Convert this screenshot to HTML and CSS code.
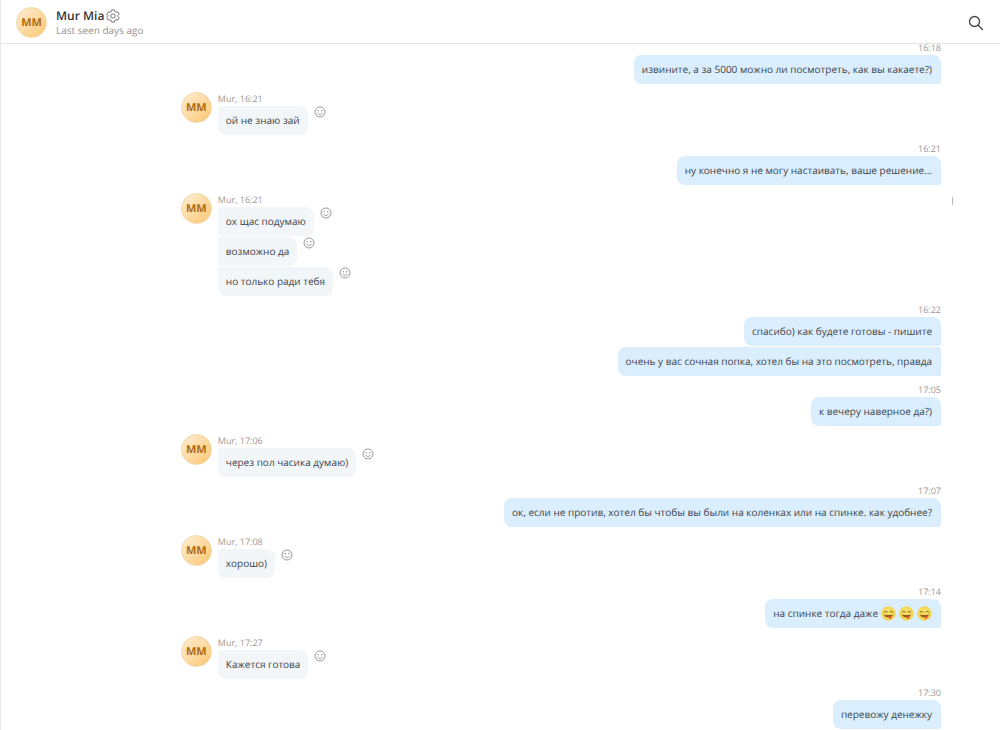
FILE: index.html
```html
<!DOCTYPE html>
<html lang="ru">
<head>
  <meta charset="UTF-8" />
  <meta name="viewport" content="width=device-width, initial-scale=1.0" />
  <title>Mur Mia</title>
  <link rel="stylesheet" href="styles.css">
</head>
<body>
  <!-- shared icons -->
  <svg class="sprite" aria-hidden="true">
    <defs>
      <radialGradient id="yum-face" cx="50%" cy="40%" r="60%">
        <stop offset="0" stop-color="#fbe66c" />
        <stop offset="1" stop-color="#f0cd48" />
      </radialGradient>
    </defs>
    <symbol id="smile" viewBox="0 0 12 12">
      <circle cx="6" cy="6" r="5" fill="none" stroke="#8c8c8c" stroke-width=".9" />
      <circle cx="4.2" cy="4.8" r=".7" fill="#8c8c8c" />
      <circle cx="7.8" cy="4.8" r=".7" fill="#8c8c8c" />
      <path d="M3.5 7.2c1.1 1.7 3.9 1.7 5 0" fill="none" stroke="#8c8c8c" stroke-width=".8" stroke-linecap="round" />
    </symbol>
    <symbol id="yum" viewBox="0 0 16 16">
      <circle cx="8" cy="8" r="7.7" fill="url(#yum-face)" />
      <path d="M3.4 6.4q1.6-1.6 3.4 0M9.2 6.400q1.700-1.600 3.400 0" fill="none" stroke="#7b6420" stroke-width="1" stroke-linecap="round" />
      <path d="M3.200 9q4.800 1.200 9.600 0q-1 3.200-4.800 3.200t-4.800-3.200z" fill="#8a5a1a" />
      <path d="M7.600 11q2.200-1.200 3.600-.2q.4 2.600-1.400 2.800q-1.700 0-2.200-2.600z" fill="#dc5230" />
    </symbol>
  </svg>

  <header class="header">
    <div class="avatar">MM</div>
    <div class="contact">
      <div class="contact-name">
        <h1>Mur Mia</h1>
        <button class="icon-btn" type="button" aria-label="Settings">
          <svg width="14" height="14" viewBox="0 0 14 14" fill="none" stroke="#6a6a6a" stroke-width=".9" stroke-linejoin="round">
            <path d="M5.5 1h3l.4 1.7 1.1.6 1.7-.5 1.5 2.5L12 6.500v1l1.200 1.200-1.500 2.500-1.700-.5-1.100.6L8.500 13h-3l-.4-1.700-1.100-.6-1.700.5L.8 8.700 2 7.500v-1L.8 5.300l1.500-2.500 1.700.5 1.100-.6z" />
            <circle cx="7" cy="7" r="2.200" />
          </svg>
        </button>
      </div>
      <p class="last-seen">Last seen days ago</p>
    </div>
    <button class="icon-btn search" type="button" aria-label="Search">
      <svg width="16" height="16" viewBox="0 0 16 16" fill="none" stroke="#444" stroke-width="1.300" stroke-linecap="round">
        <circle cx="6.500" cy="6.500" r="5" />
        <path d="M10.200 10.200l4.300 4.300" />
      </svg>
    </button>
  </header>

  <main class="messages">
    <section class="group own">
      <div class="meta">16:18</div>
      <div class="row"><p class="bubble">извините, а за 5000 можно ли посмотреть, как вы какаете?)</p></div>
    </section>

    <section class="group">
      <div class="avatar">MM</div>
      <div class="thread">
        <div class="meta">Mur, 16:21</div>
        <div class="row">
          <p class="bubble">ой не знаю зай</p>
          <button class="icon-btn react" type="button" aria-label="React"><svg width="12" height="12"><use href="#smile" /></svg></button>
        </div>
      </div>
    </section>

    <section class="group own">
      <div class="meta">16:21</div>
      <div class="row"><p class="bubble">ну конечно я не могу настаивать, ваше решение...</p></div>
    </section>

    <section class="group">
      <div class="avatar">MM</div>
      <div class="thread">
        <div class="meta">Mur, 16:21</div>
        <div class="row">
          <p class="bubble">ох щас подумаю</p>
          <button class="icon-btn react" type="button" aria-label="React"><svg width="12" height="12"><use href="#smile" /></svg></button>
        </div>
        <div class="row">
          <p class="bubble">возможно да</p>
          <button class="icon-btn react" type="button" aria-label="React"><svg width="12" height="12"><use href="#smile" /></svg></button>
        </div>
        <div class="row">
          <p class="bubble">но только ради тебя</p>
          <button class="icon-btn react" type="button" aria-label="React"><svg width="12" height="12"><use href="#smile" /></svg></button>
        </div>
      </div>
    </section>

    <section class="group own">
      <div class="meta">16:22</div>
      <div class="row"><p class="bubble">спасибо) как будете готовы - пишите</p></div>
      <div class="row"><p class="bubble">очень у вас сочная попка, хотел бы на это посмотреть, правда</p></div>
    </section>

    <section class="group own">
      <div class="meta">17:05</div>
      <div class="row"><p class="bubble">к вечеру наверное да?)</p></div>
    </section>

    <section class="group">
      <div class="avatar">MM</div>
      <div class="thread">
        <div class="meta">Mur, 17:06</div>
        <div class="row">
          <p class="bubble">через пол часика думаю)</p>
          <button class="icon-btn react" type="button" aria-label="React"><svg width="12" height="12"><use href="#smile" /></svg></button>
        </div>
      </div>
    </section>

    <section class="group own">
      <div class="meta">17:07</div>
      <div class="row"><p class="bubble">ок, если не против, хотел бы чтобы вы были на коленках или на спинке. как удобнее?</p></div>
    </section>

    <section class="group">
      <div class="avatar">MM</div>
      <div class="thread">
        <div class="meta">Mur, 17:08</div>
        <div class="row">
          <p class="bubble">хорошо)</p>
          <button class="icon-btn react" type="button" aria-label="React"><svg width="12" height="12"><use href="#smile" /></svg></button>
        </div>
      </div>
    </section>

    <section class="group own">
      <div class="meta">17:14</div>
      <div class="row">
        <p class="bubble with-emoji">на спинке тогда даже
          <svg class="emoji"><use href="#yum" /></svg>
          <svg class="emoji"><use href="#yum" /></svg>
          <svg class="emoji"><use href="#yum" /></svg>
        </p>
      </div>
    </section>

    <section class="group">
      <div class="avatar">MM</div>
      <div class="thread">
        <div class="meta">Mur, 17:27</div>
        <div class="row">
          <p class="bubble">Кажется готова</p>
          <button class="icon-btn react" type="button" aria-label="React"><svg width="12" height="12"><use href="#smile" /></svg></button>
        </div>
      </div>
    </section>

    <section class="group own">
      <div class="meta">17:30</div>
      <div class="row"><p class="bubble">перевожу денежку</p></div>
    </section>
    <div class="scroll-mark"></div>
  </main>
</body>
</html>
```

FILE: styles.css
```css
* { box-sizing: border-box; }
body {
  margin: 0;
  height: 100vh;
  display: flex;
  flex-direction: column;
  overflow: hidden;
  border-left: 1px solid #e9e9e9;
  background: #fff;
  color: #3c444b;
  font-family: "Open Sans", "Noto Sans", sans-serif;
  font-size: 10px;
  text-rendering: geometricPrecision;
}
h1, p { margin: 0; }
.sprite { position: absolute; width: 0; height: 0; }

.icon-btn { display: flex; padding: 0; border: 0; background: none; cursor: pointer; }

.header {
  display: flex;
  flex: none;
  align-items: center;
  padding: 7px 16px 5px 15px;
  border-bottom: 1px solid #e3e3e3;
  background: #fff;
  z-index: 1;
}
.contact { flex: 1; margin-left: 9px; }
.contact-name { display: flex; align-items: center; gap: 2px; }
.contact-name h1 { font-size: 12px; line-height: 16px; font-weight: 600; color: #333; }
.last-seen { font-size: 10px; line-height: 13px; color: #949494; }

.avatar {
  flex: none;
  width: 31px;
  height: 31px;
  border: 1px solid #f0d7a8;
  border-radius: 50%;
  background: linear-gradient(135deg, #ffefd6, #fbc670);
  color: #b06c10;
  font-size: 11px;
  font-weight: 700;
  line-height: 30px;
  text-align: center;
}

.messages {
  position: relative;
  flex: 1;
  min-height: 0;
  padding: 0 59px 0 18%;
}
.group { display: flex; margin-top: 8px; }
.group.own { flex-direction: column; align-items: flex-end; margin-top: 7px; }
.group:first-child { margin-top: -3px; }
.thread { margin-left: 6px; }
.meta { height: 14px; font-size: 9px; line-height: 14px; color: #999; }
.row { display: flex; align-items: flex-start; }
.row + .row { margin-top: 1px; }

.bubble {
  padding: 7px 8px;
  border-radius: 2px 8px 8px 2px;
  background: #f2f6f9;
  line-height: 15px;
}
.row:last-child .bubble { border-bottom-left-radius: 8px; }
.own .bubble {
  padding-right: 9px;
  border-radius: 8px 2px 2px 8px;
  background: #dbeefd;
}
.own .meta + .row .bubble { border-top-right-radius: 8px; }
.react { margin-left: 6px; }

.with-emoji { display: flex; align-items: center; gap: 3px; }
.emoji { width: 15px; height: 15px; }

.scroll-mark {
  position: absolute;
  top: 153px;
  right: 47px;
  width: 1px;
  height: 8px;
  background: #bbb;
}
```
